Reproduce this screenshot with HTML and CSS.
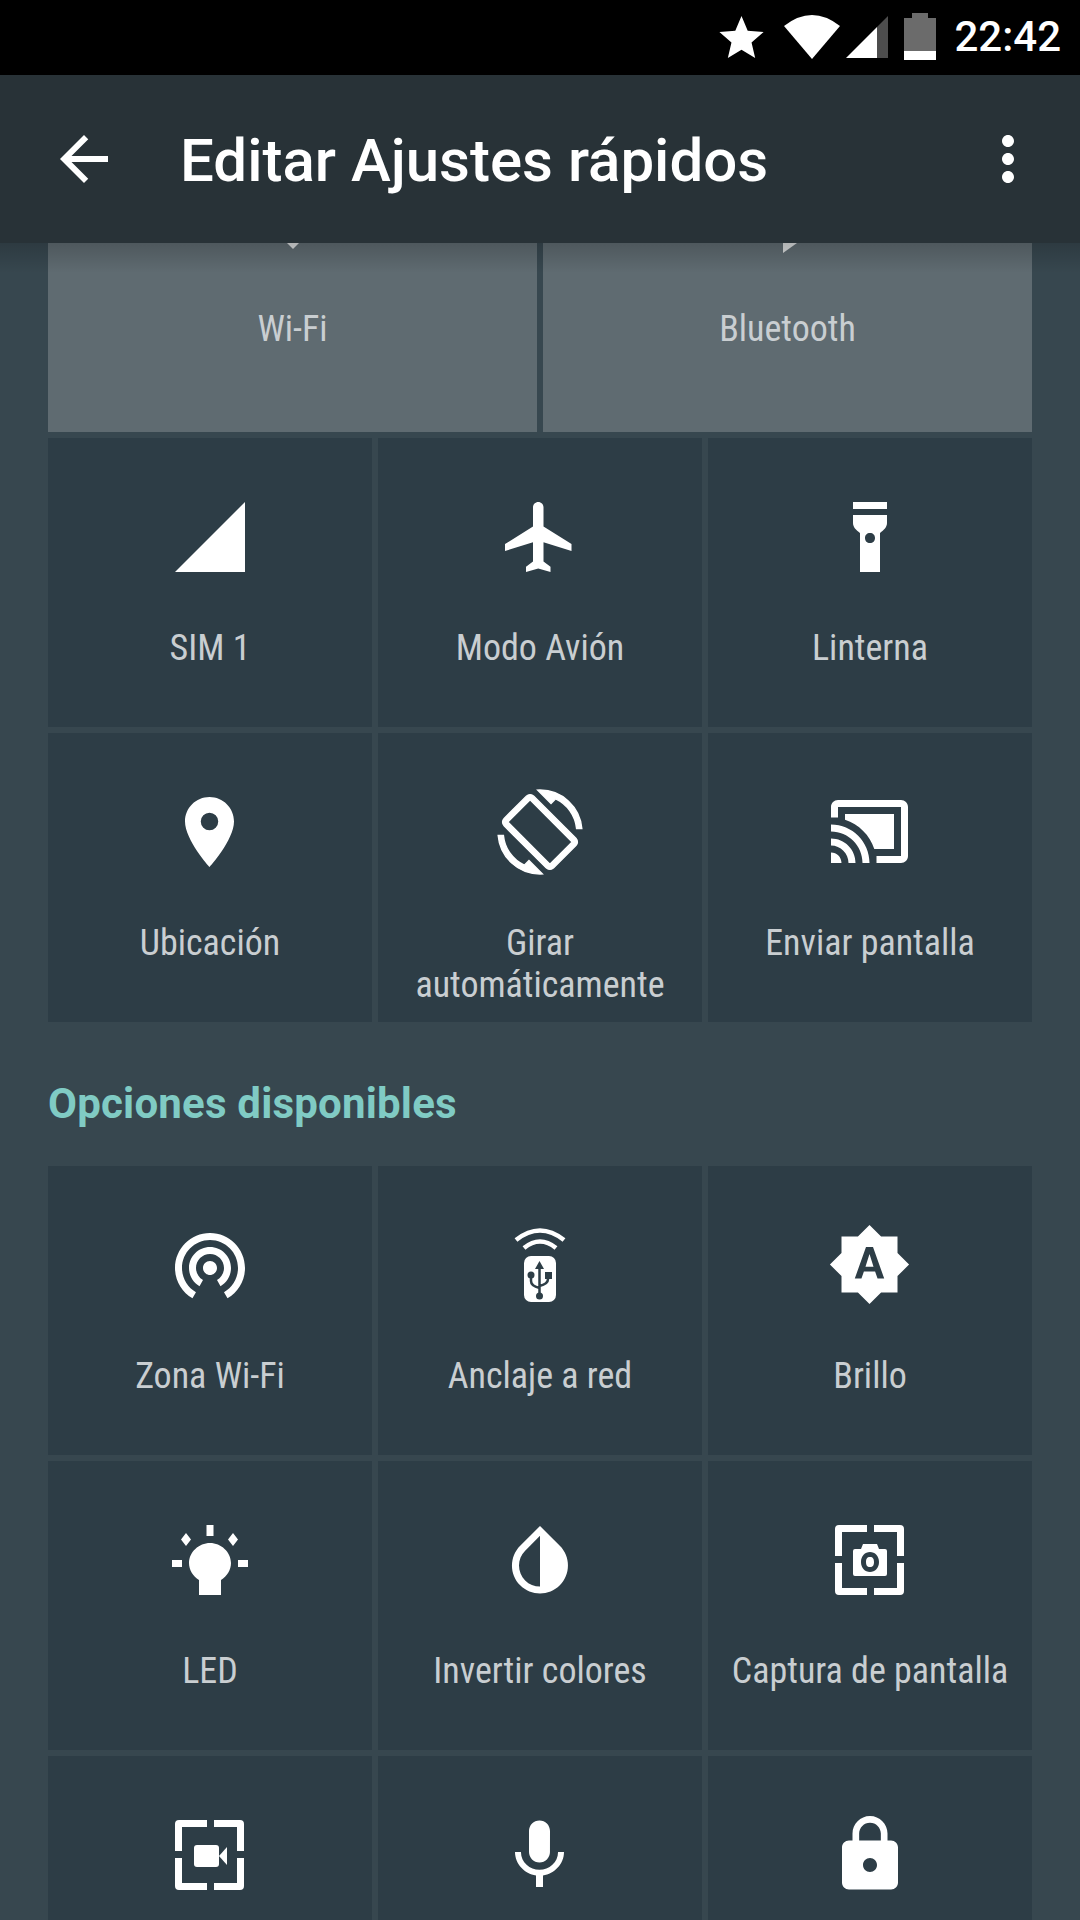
FILE: index.html
```html
<!DOCTYPE html>
<html lang="es">
<head>
<meta charset="utf-8">
<title>Editar Ajustes rápidos</title>
<link rel="stylesheet" href="styles.css">
</head>
<body>
<div class="screen">
  <header class="status">
    <svg class="s-star" viewBox="2 2 20 19"><path d="M12 17.27L18.18 21l-1.64-7.03L22 9.24l-7.19-.61L12 2 9.19 8.63 2 9.24l5.46 4.73L5.82 21z"/></svg>
    <svg class="s-wifi" viewBox="0 0 56 44"><path d="M0 11Q28-11 56 11L28 44Z"/></svg>
    <svg class="s-signal" viewBox="0 0 42 42"><path class="dim" d="M31 11L42 0V42H31Z"/><path d="M0 42L31 11V42Z"/></svg>
    <svg class="s-batt" viewBox="0 0 32 47"><path class="dim2" d="M8 0H24V5H32V38H0V5H8Z"/><path d="M0 38H32V47H0Z"/></svg>
    <span class="clock">22:42</span>
  </header>
  <div class="appbar">
    <svg class="bar-icon" viewBox="0 0 24 24"><path d="M20 11H7.83l5.59-5.59L12 4l-8 8 8 8 1.41-1.41L7.83 13H20v-2z"/></svg>
    <h1 class="title">Editar Ajustes rápidos</h1>
    <svg class="bar-icon" viewBox="0 0 24 24"><path d="M12 8c1.1 0 2-.9 2-2s-.9-2-2-2-2 .9-2 2 .9 2 2 2zm0 2c-1.1 0-2 .9-2 2s.9 2 2 2 2-.9 2-2-.9-2-2-2zm0 6c-1.1 0-2 .9-2 2s.9 2 2 2 2-.9 2-2-.9-2-2-2z"/></svg>
  </div>
  <main class="content">
    <div class="grid-top">
      <div class="tile-big">
        <svg class="peek" viewBox="0 0 14 10"><path d="M1 0H13L7 6Z"/></svg>
        <span class="label">Wi-Fi</span>
      </div>
      <div class="tile-big">
        <svg class="peek peek-bt" viewBox="0 0 14 10"><path d="M0 0H14L0 10Z"/></svg>
        <span class="label">Bluetooth</span>
      </div>
    </div>
    <div class="grid">
      <div class="tile">
        <svg class="icon" viewBox="0 0 72 72"><path d="M1 71L71 1V71Z"/></svg>
        <span class="label">SIM 1</span>
      </div>
      <div class="tile">
        <svg class="icon" viewBox="0 0 72 72"><path transform="translate(-6 -6) scale(3.5)" d="M21 16v-2l-8-5V3.5c0-.83-.67-1.5-1.5-1.5S10 2.67 10 3.5V9l-8 5v2l8-2.5V19l-2 1.5V22l3.5-1 3.5 1v-1.5L13 19v-5.5l8 2.5z"/></svg>
        <span class="label">Modo Avión</span>
      </div>
      <div class="tile">
        <svg class="icon" viewBox="0 0 72 72"><path fill-rule="evenodd" d="M19 1H53V8H19ZM19 14H53V22C53 26 50 29 46 32V71H26V32C22 29 19 26 19 22ZM36 32C33 32 31 34 31 37S33 42 36 42 41 40 41 37 39 32 36 32Z"/></svg>
        <span class="label">Linterna</span>
      </div>
      <div class="tile">
        <svg class="icon" viewBox="0 0 72 72"><path transform="translate(-6.5 -6) scale(3.5)" d="M12 2C8.13 2 5 5.13 5 9c0 5.25 7 13 7 13s7-7.75 7-13c0-3.87-3.13-7-7-7zm0 9.5a2.5 2.5 0 010-5 2.5 2.5 0 010 5z"/></svg>
        <span class="label">Ubicación</span>
      </div>
      <div class="tile">
        <svg class="icon" viewBox="0 0 72 72"><path class="thick" transform="translate(-6 -6) scale(3.5)" d="M16.48 2.52c3.27 1.55 5.61 4.72 5.97 8.48h1.5C23.44 4.84 18.29 0 12 0l-.66.03 3.81 3.81 1.33-1.32zm-6.25-.77c-.59-.59-1.54-.59-2.12 0L1.75 8.11c-.59.59-.59 1.54 0 2.12l12.02 12.02c.59.59 1.54.59 2.12 0l6.36-6.36c.59-.59.59-1.54 0-2.12L10.23 1.75zm4.6 19.44L2.81 9.17l6.36-6.36 12.02 12.02-6.36 6.36zm-7.31.29C4.25 19.94 1.91 16.76 1.55 13H.05C.56 19.16 5.71 24 12 24l.66-.03-3.81-3.81-1.33 1.32z"/></svg>
        <span class="label">Girar automáticamente</span>
      </div>
      <div class="tile">
        <svg class="icon" viewBox="0 0 72 72"><path transform="translate(-6.5 -6.5) scale(3.5)" d="M1 18v3h3c0-1.66-1.34-3-3-3zm0-4v2c2.76 0 5 2.24 5 5h2c0-3.87-3.13-7-7-7zm18-7H5v1.63c3.96 1.28 7.09 4.41 8.37 8.37H19V7zM1 10v2c4.97 0 9 4.03 9 9h2c0-6.08-4.93-11-11-11zm20-7H3c-1.1 0-2 .9-2 2v3h2V5h18v14h-7v2h7c1.1 0 2-.9 2-2V5c0-1.1-.9-2-2-2z"/></svg>
        <span class="label">Enviar pantalla</span>
      </div>
    </div>
    <h2 class="section">Opciones disponibles</h2>
    <div class="grid">
      <div class="tile">
        <svg class="icon" viewBox="0 0 72 72"><path transform="translate(-6 -6.5) scale(3.5)" d="M12 11c-1.1 0-2 .9-2 2s.9 2 2 2 2-.9 2-2-.9-2-2-2zm6 2c0-3.31-2.69-6-6-6s-6 2.69-6 6c0 2.22 1.21 4.15 3 5.19l1-1.74c-1.19-.7-2-1.97-2-3.45 0-2.21 1.79-4 4-4s4 1.79 4 4c0 1.48-.81 2.75-2 3.45l1 1.74c1.79-1.04 3-2.97 3-5.19zM12 3C6.48 3 2 7.48 2 13c0 3.7 2.01 6.92 4.99 8.65l1-1.73C5.61 18.53 4 15.96 4 13c0-4.42 3.58-8 8-8s8 3.58 8 8c0 2.96-1.61 5.53-4 6.92l1 1.73c2.99-1.73 5-4.95 5-8.65 0-5.52-4.48-10-10-10z"/></svg>
        <span class="label">Zona Wi-Fi</span>
      </div>
      <div class="tile">
        <svg class="icon" viewBox="0 0 72 72">
          <path class="line-w" d="M12 11Q36-8 60 11"/>
          <path class="line-w" d="M20 19Q36 6 52 19"/>
          <rect x="20" y="27" width="32" height="46" rx="7"/>
          <path class="cut-fill" d="M35.5 32L40 40H31Z"/>
          <path class="cut" d="M35.5 38V66M27 47V52Q27 57 35.5 59M44 47V50Q44 55 35.5 57"/>
          <circle class="cut-fill" cx="27" cy="46" r="3.5"/>
          <rect class="cut-fill" x="41" y="43" width="7" height="7"/>
          <circle class="cut-fill" cx="35.5" cy="67" r="3.5"/>
        </svg>
        <span class="label">Anclaje a red</span>
      </div>
      <div class="tile">
        <svg class="icon" viewBox="0 0 72 72"><path transform="translate(-6.5 -6.5) scale(3.5)" d="M10.85 12.65h2.3L12 9l-1.15 3.65zM20 8.69V4h-4.69L12 .69 8.69 4H4v4.69L.69 12 4 15.31V20h4.69L12 23.31 15.31 20H20v-4.69L23.31 12 20 8.69zM14.3 16l-.7-2h-3.2l-.7 2H7.8L11 7h2l3.2 9h-1.9z"/></svg>
        <span class="label">Brillo</span>
      </div>
      <div class="tile">
        <svg class="icon" viewBox="0 0 72 72">
          <path d="M36 19C25 19 15 28 15 39C15 46 19 52 25 56V71H47V56C53 52 57 46 57 39C57 28 47 19 36 19Z"/>
          <path d="M32.500 1H39.500V12H32.500ZM-2 36H8V43H-2ZM64 36H74V43H64ZM12 9L17 15.500 12 22 7 15.500ZM59 9L64 15.500 59 22 54 15.500Z"/>
        </svg>
        <span class="label">LED</span>
      </div>
      <div class="tile">
        <svg class="icon" viewBox="0 0 72 72"><path transform="translate(-6 -6) scale(3.5)" d="M17.66 7.93L12 2.27 6.34 7.93c-3.12 3.12-3.12 8.19 0 11.31C7.9 20.8 9.95 21.58 12 21.58c2.05 0 4.1-.78 5.66-2.34 3.12-3.12 3.12-8.19 0-11.31zM12 19.59c-1.6 0-3.11-.62-4.24-1.76C6.62 16.69 6 15.19 6 13.59s.62-3.11 1.76-4.24L12 5.1v14.49z"/></svg>
        <span class="label">Invertir colores</span>
      </div>
      <div class="tile">
        <svg class="icon" viewBox="0 0 72 72">
          <path d="M5 1H33V8H8V32H1V5Q1 1 5 1ZM40 1H66Q70 1 70 5V32H63V8H40ZM1 39H8V64H33V71H5Q1 71 1 67ZM63 39H70V67Q70 71 66 71H40V64H63Z"/>
          <path fill-rule="evenodd" d="M29 20H43L45 25H51Q53 25 53 27V50Q53 52 51 52H21Q19 52 19 50V27Q19 25 21 25H27ZM36 28C31 28 27 32 27 38S31 48 36 48 45 44 45 38 41 28 36 28ZM36 33C33 33 32 35 32 38S33 43 36 43 40 41 40 38 39 33 36 33Z"/>
        </svg>
        <span class="label">Captura de pantalla</span>
      </div>
      <div class="tile">
        <svg class="icon" viewBox="0 0 72 72">
          <path d="M5 1H33V8H8V32H1V5Q1 1 5 1ZM40 1H66Q70 1 70 5V32H63V8H40ZM1 39H8V64H33V71H5Q1 71 1 67ZM63 39H70V67Q70 71 66 71H40V64H63Z"/>
          <rect x="20" y="26" width="25" height="22" rx="3"/>
          <path d="M45 37L53 28V46Z"/>
        </svg>
      </div>
      <div class="tile">
        <svg class="icon" viewBox="0 0 72 72"><path transform="translate(-6.5 -5.500) scale(3.5)" d="M12 14c1.66 0 2.99-1.34 2.99-3L15 5c0-1.66-1.34-3-3-3S9 3.34 9 5v6c0 1.66 1.34 3 3 3zm5.3-3c0 3-2.54 5.1-5.3 5.1S6.7 14 6.7 11H5c0 3.41 2.72 6.23 6 6.72V21h2v-3.28c3.28-.48 6-3.3 6-6.72h-1.7z"/></svg>
      </div>
      <div class="tile">
        <svg class="icon" viewBox="0 0 72 72"><path transform="translate(-6 -6.500) scale(3.5)" d="M18 8h-1V6c0-2.76-2.24-5-5-5S7 3.24 7 6v2H6c-1.1 0-2 .9-2 2v10c0 1.1.9 2 2 2h12c1.1 0 2-.9 2-2V10c0-1.1-.9-2-2-2zm-6 9c-1.100 0-2-.9-2-2s.9-2 2-2 2 .9 2 2-.9 2-2 2zm3.100-9H8.900V6c0-1.710 1.390-3.100 3.100-3.100 1.710 0 3.100 1.390 3.100 3.100v2z"/></svg>
      </div>
    </div>
  </main>
</div>
</body>
</html>
```

FILE: styles.css
```css
* { box-sizing: border-box; }
html, body { margin: 0; padding: 0; background: #37474f; }
.screen {
  width: 1080px;
  height: 1920px;
  overflow: hidden;
  display: flex;
  flex-direction: column;
  font-family: Roboto, "Noto Sans", sans-serif;
  background: #37474f;
}
svg { display: block; fill: #fff; overflow: visible; flex: none; }

.status {
  height: 75px;
  flex: none;
  background: #000;
  display: flex;
  align-items: center;
  justify-content: flex-end;
  padding: 0 19px 2px 0;
  color: #fff;
}
.s-star { width: 45px; height: 42px; }
.s-wifi { width: 56px; height: 44px; margin-left: 20px; }
.s-signal { width: 42px; height: 42px; margin-left: 6px; }
.s-batt { width: 32px; height: 47px; margin-left: 16px; }
.dim { fill: #4d4d4d; }
.dim2 { fill: #6b6b6b; }
.clock { font-size: 42px; font-weight: 500; margin-left: 18px; line-height: 50px; }

.appbar {
  height: 168px;
  flex: none;
  background: #283237;
  display: flex;
  align-items: center;
  padding: 0 36px 0 48px;
  position: relative;
  z-index: 2;
}
.appbar::after {
  content: "";
  position: absolute;
  left: 0;
  right: 0;
  top: 100%;
  height: 30px;
  background: linear-gradient(rgba(0,0,0,.18), rgba(0,0,0,0));
}
.bar-icon { width: 72px; height: 72px; }
.title {
  flex: 1;
  margin: 3px 0 0 60px;
  font-size: 60px;
  font-weight: 500;
  color: #fff;
  line-height: 72px;
}

.content { flex: 1; padding: 0 48px; }
.grid-top {
  display: grid;
  grid-template-columns: 1fr 1fr;
  gap: 6px;
  margin-bottom: 6px;
}
.tile-big {
  height: 189px;
  background: #5f6b71;
  display: flex;
  flex-direction: column;
  align-items: center;
}
.peek { width: 14px; height: 10px; fill: #d7dadb; margin-bottom: 55px; }
.peek-bt { margin-left: 5px; }
.grid {
  display: grid;
  grid-template-columns: repeat(3, 1fr);
  grid-auto-rows: 289px;
  gap: 6px;
}
.tile {
  background: #2d3d46;
  display: flex;
  flex-direction: column;
  align-items: center;
  padding-top: 63px;
}
.icon { width: 72px; height: 72px; margin-bottom: 54px; }
.label {
  font-size: 36px;
  line-height: 42px;
  color: #c9ced1;
  text-align: center;
  font-stretch: 75%;
}
.thick { stroke: #fff; stroke-width: .4; }
.line-w { fill: none; stroke: #fff; stroke-width: 4.5; }
.cut { fill: none; stroke: #2d3d46; stroke-width: 2.5; }
.cut-fill { fill: #2d3d46; }
.section {
  margin: 0;
  height: 144px;
  padding-top: 18px;
  display: flex;
  align-items: center;
  font-size: 42px;
  font-weight: 700;
  letter-spacing: .2px;
  color: #80cbc4;
}
```
